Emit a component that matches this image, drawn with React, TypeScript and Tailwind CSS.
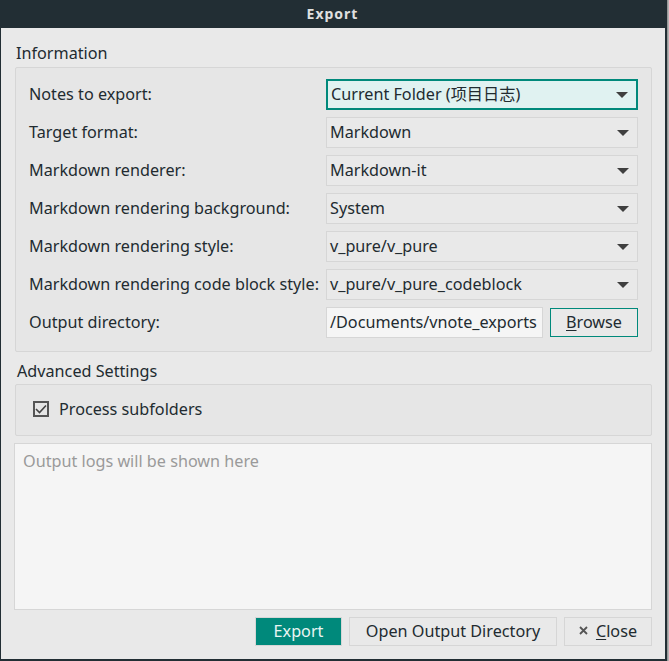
import React from 'react';

const font = { fontFamily: '"Noto Sans", "Noto Sans CJK SC", sans-serif' };

const Arrow = () => (
  <svg width="12" height="6" viewBox="0 0 12 6" className="shrink-0">
    <path d="M0 0H12L6 6Z" fill="#3f3f3f" />
  </svg>
);

const Combo = ({ value, focused }: { value: string; focused?: boolean }) => (
  <div
    className={`flex h-[31px] items-center justify-between pr-[8px] ${
      focused
        ? 'border-2 border-[#00897b] bg-[#e0f2f1] pl-[3px]'
        : 'border border-[#d6d6d6] bg-[#e9e9e9] pl-[3px]'
    }`}
  >
    <span className="whitespace-nowrap pb-[2px]">{value}</span>
    <Arrow />
  </div>
);

const rows = [
  { label: 'Notes to export:', value: 'Current Folder (项目日志)', focused: true },
  { label: 'Target format:', value: 'Markdown' },
  { label: 'Markdown renderer:', value: 'Markdown-it' },
  { label: 'Markdown rendering background:', value: 'System' },
  { label: 'Markdown rendering style:', value: 'v_pure/v_pure' },
  { label: 'Markdown rendering code block style:', value: 'v_pure/v_pure_codeblock' },
];

export default function App() {
  return (
    <div className="flex h-[661px] w-[669px] overflow-hidden" style={font}>
      <div className="flex w-[667px] flex-col bg-[#222e34] text-[16.2px] leading-[22px] text-[#222b30]">
        <div className="flex h-[28px] w-[665px] shrink-0 items-center justify-center pb-px text-[14px] font-bold tracking-[1px] text-[#e0e0e0]">
          Export
        </div>
        <div className="mb-[2px] ml-[1px] mr-[2px] flex flex-1 flex-col bg-[#e9e9e9] pl-[14px] pr-[13px]">
          <div className="mt-[14px] pl-px">Information</div>
          <div className="mt-[3px] flex h-[285px] flex-col gap-[7px] rounded-[2px] border border-[#d6d6d6] bg-[#e6e6e6] pl-[13px] pr-[13px] pt-[11px]">
            {rows.map((row) => (
              <div key={row.label} className="grid grid-cols-[297px_1fr] items-center">
                <span className="whitespace-nowrap pb-[2px]">{row.label}</span>
                <Combo value={row.value} focused={row.focused} />
              </div>
            ))}
            <div className="grid grid-cols-[297px_1fr] items-center">
              <span className="pb-[2px]">Output directory:</span>
              <div className="flex items-center justify-between">
                <div className="flex h-[31px] w-[217px] items-center overflow-hidden whitespace-nowrap border border-[#d6d6d6] bg-[#f5f5f5] pb-[2px] pl-[3px]">
                  /Documents/vnote_exports
                </div>
                <button className="h-[29px] w-[88px] border border-[#00897b] bg-[#e9e9e9] pb-[2px]">
                  <span className="underline underline-offset-2">B</span>rowse
                </button>
              </div>
            </div>
          </div>
          <div className="mt-[8px] pl-[2px]">Advanced Settings</div>
          <div className="mt-[2px] flex h-[52px] items-center gap-[10px] rounded-[2px] border border-[#d6d6d6] bg-[#e6e6e6] pb-[2px] pl-[17px]">
            <div className="flex h-[16px] w-[16px] items-center justify-center border-2 border-[#555555]">
              <svg width="12" height="10" viewBox="0 0 12 10">
                <path d="M1 5L4.5 8.5L11 1.5" fill="none" stroke="#444444" strokeWidth="1.6" />
              </svg>
            </div>
            <span>Process subfolders</span>
          </div>
          <div className="-ml-px mt-[7px] h-[167px] border border-[#d6d6d6] bg-[#f5f5f5] pl-[8px] pt-[6px] text-[#9a9a9a]">
            Output logs will be shown here
          </div>
          <div className="mt-[7px] flex justify-end gap-[7px]">
            <button className="h-[29px] w-[87px] border border-[#d6d6d6] bg-[#00897b] pb-[2px] text-[#e9f5f3]">Export</button>
            <button className="h-[29px] w-[208px] border border-[#d6d6d6] bg-[#e9e9e9] pb-[2px]">Open Output Directory</button>
            <button className="flex h-[29px] w-[88px] items-center justify-center gap-[8px] border border-[#d6d6d6] bg-[#e9e9e9] pb-[2px]">
              <svg width="9" height="9" viewBox="0 0 9 9">
                <path d="M1 1L8 8M8 1L1 8" stroke="#555555" strokeWidth="1.8" />
              </svg>
              <span>
                <span className="underline underline-offset-2">C</span>lose
              </span>
            </button>
          </div>
        </div>
      </div>
      <div className="w-[2px] bg-gradient-to-r from-[#8a8a8a] to-[#c4c4c4]" />
    </div>
  );
}
